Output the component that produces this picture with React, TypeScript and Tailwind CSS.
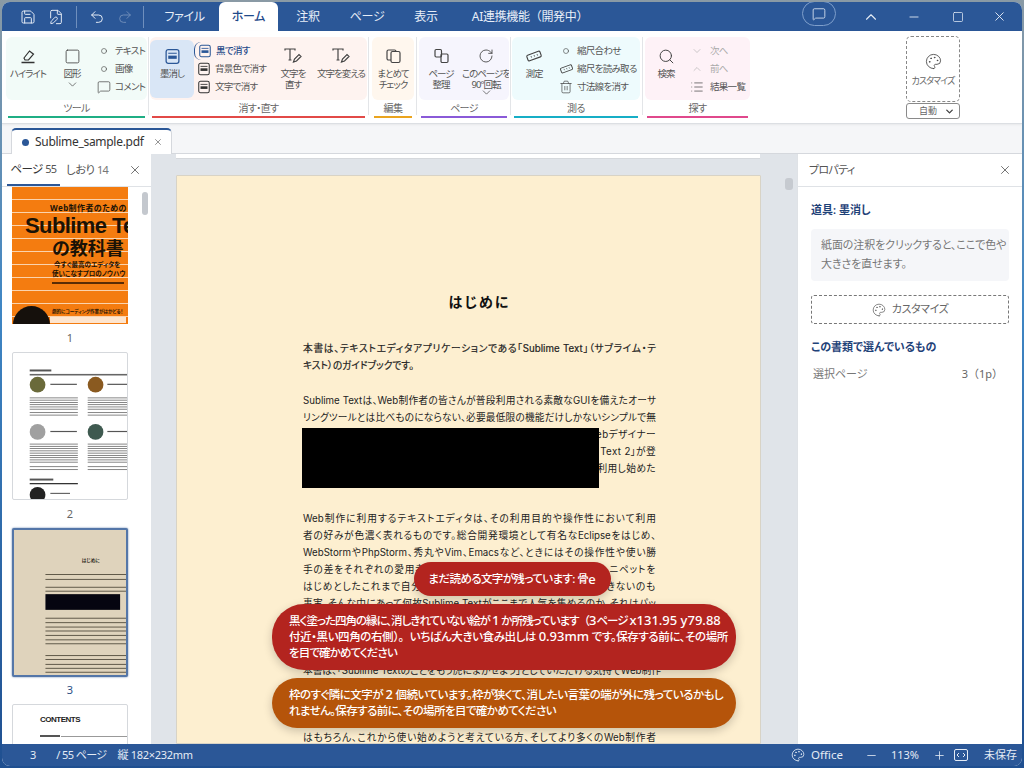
import React from "react";
import { Save, FilePen, Undo2, Redo2, MessageSquare, ChevronUp, ChevronDown, Minus, Plus, Square, X, Circle, RotateCw, Trash2, Search, List, Palette } from "lucide-react";

const Redact = ({ s = 16, c = "#333" }: { s?: number; c?: string }) => (
  <svg width={s} height={s} viewBox="0 0 16 16" fill="none">
    <rect x="2" y="1.5" width="12" height="13" rx="2" stroke={c} strokeWidth="1.2" />
    <rect x="4" y="7.2" width="8" height="3" fill={c} />
    <line x1="4" y1="5" x2="12" y2="5" stroke={c} />
  </svg>
);
const TPen = () => (
  <svg width="20" height="18" viewBox="0 0 20 18" fill="none" stroke="#444" strokeWidth="1.2">
    <path d="M2 3.5V2h10v1.5M7 2v11M5.5 13h3" />
    <path d="M10.5 15l1-3 4.5-4.5 2 2-4.5 4.5z" />
  </svg>
);
const Highlight = () => (
  <svg width="18" height="18" viewBox="0 0 18 18" fill="none" stroke="#333" strokeWidth="1.2">
    <path d="M5 11l5.5-7 4 3.2L9.5 13H6z" />
    <path d="M2.5 15.5h13" strokeWidth="1.6" />
  </svg>
);
const Pages = () => (
  <svg width="17" height="18" viewBox="0 0 17 18" fill="none" stroke="#444" strokeWidth="1.2">
    <rect x="2" y="3" width="9" height="10" rx="1.5" />
    <rect x="6" y="4.5" width="9" height="11" rx="1.5" fill="#fff7ee" />
  </svg>
);
const Organize = () => (
  <svg width="17" height="18" viewBox="0 0 17 18" fill="none" stroke="#444" strokeWidth="1.2">
    <rect x="2" y="2.5" width="6.5" height="7.5" rx="1.2" />
    <rect x="8" y="7" width="7" height="8.5" rx="1.2" />
  </svg>
);
const RulerTilt = ({ w = 18 }: { w?: number }) => (
  <svg width={w} height={w * 0.78} viewBox="0 0 18 14" fill="none" stroke="#444" strokeWidth="1.1">
    <rect x="2" y="4" width="14" height="6" rx="1.3" transform="rotate(-20 9 7)" />
    <path d="M6 7l.6 1.6M9 6l.6 1.6M12 5l.6 1.6" strokeWidth="0.8" />
  </svg>
);

const Big = ({ icon, label, w, sub, chev, className = "" }: { icon: React.ReactNode; label: React.ReactNode; w: string; sub?: React.ReactNode; chev?: boolean; className?: string }) => (
  <div className={`${w} ${className} flex flex-col items-center shrink-0 pt-[10px] text-[9.5px] tracking-[-1px] leading-[11px] text-[#555] text-center whitespace-nowrap`}>
    <div className="h-[18px] flex items-center justify-center">{icon}</div>
    <div className="mt-[3px]">{label}</div>
    {sub && <div>{sub}</div>}
    {chev && <ChevronDown size={13} strokeWidth={1.3} className="text-[#444] -mt-[1px]" />}
  </div>
);
const Row = ({ icon, label, cls = "text-[#555]" }: { icon: React.ReactNode; label: string; cls?: string }) => (
  <div className={`h-[18px] flex items-center text-[9.5px] tracking-[-0.7px] whitespace-nowrap ${cls}`}>
    <div className="w-[20px] flex justify-center shrink-0 mr-[1px]">{icon}</div>
    <span>{label}</span>
  </div>
);
const Group = ({ w, pill, bar, label, children }: { w: string; pill: string; bar: string; label: string; children: React.ReactNode }) => (
  <div className={`${w} shrink-0 flex flex-col`}>
    <div className={`h-[63px] rounded-[6px] flex ${pill} overflow-hidden`}>{children}</div>
    <div className="h-[16px] flex items-center justify-center text-[10px] tracking-[-0.6px] text-[#666]">{label}</div>
    <div className={`h-[2px] mx-[2px] ${bar}`} />
  </div>
);
const Div = ({ cls }: { cls: string }) => <div className={`w-px h-[78px] bg-[#e3e5e8] shrink-0 ${cls}`} />;

const Dot = () => <Circle size={6} strokeWidth={2.2} className="text-[#333]" />;

const Tab = ({ children, w, active }: { children: React.ReactNode; w: string; active?: boolean }) => (
  <div className={`${w} shrink-0 flex items-center justify-center text-[12px] tracking-[-0.3px] h-[29px] whitespace-nowrap ${active ? "bg-white text-[#1f4a8a] font-medium rounded-t-[6px]" : "text-[#e8eef7]"}`}>{children}</div>
);

const L = ({ children, j = true, b }: { children?: React.ReactNode; j?: boolean; b?: boolean }) => (
  <div className={`h-[17px] shrink-0 leading-[17px] whitespace-nowrap ${j ? "[text-align-last:justify]" : ""} ${b ? "[-webkit-text-stroke:0.2px_#222]" : ""}`}>{children}</div>
);
const Split = ({ a, z }: { a: string; z: string }) => (
  <div className="h-[17px] shrink-0 leading-[17px] whitespace-nowrap flex justify-between tracking-[0.8px]"><span>{a}</span><span>{z}</span></div>
);

const lines = (ys: number[], x1: number, x2: number, h = 0.8, fill = "#666") =>
  ys.map((y) => <rect key={`${x1}-${y}`} x={x1} y={y} width={x2 - x1} height={h} fill={fill} />);

const Thumb2 = () => (
  <svg width="114" height="146" viewBox="0 0 116 148" className="block">
    <rect x="17" y="16.5" width="22" height="2" fill="#555" />
    <rect x="17" y="21" width="99" height="1.6" fill="#666" />
    <circle cx="25" cy="32" r="8" fill="#6a6a3a" /><circle cx="84" cy="32" r="8" fill="#8a5a20" />
    <circle cx="25" cy="80" r="8" fill="#a0a0a0" /><circle cx="84" cy="80" r="8" fill="#3f5a50" />
    <rect x="38" y="31" width="27" height="1.2" fill="#555" /><rect x="96" y="31" width="20" height="1.2" fill="#555" />
    <rect x="38" y="79" width="27" height="1.2" fill="#555" /><rect x="96" y="79" width="20" height="1.2" fill="#555" />
    {lines([45, 47.3, 49.6, 51.9, 54.2, 56.5, 60, 62.5], 17, 66)}
    {lines([45, 47.3, 49.6, 51.9, 54.2, 56.5, 60, 62.5], 76, 116)}
    {lines([92, 94.3, 96.6, 98.9, 101.2, 103.5, 105.8, 108.1, 110.4, 115, 118], 17, 66)}
    {lines([92, 94.3, 96.6, 98.9, 101.2, 103.5, 105.8, 108.1, 110.4, 115, 118], 76, 116)}
    <rect x="17" y="127.5" width="24" height="2" fill="#555" />
    <rect x="17" y="132" width="49" height="1.3" fill="#333" />
    <circle cx="25" cy="144" r="8" fill="#222" /><rect x="38" y="142" width="20" height="1.2" fill="#666" />
  </svg>
);
const Thumb3 = () => (
  <svg width="112" height="145" viewBox="0 0 114 147" className="block">
    <text x="69" y="32" fontSize="4.8" fontWeight="700" fill="#332e25">はじめに</text>
    {lines([44.5, 49.5, 57.5, 61.5, 89, 93.5, 98, 102, 106.5, 111, 115, 127, 131, 136, 140, 144], 32, 114, 1, "#5f5848")}
    <rect x="32" y="65" width="76" height="16" fill="#050510" />
  </svg>
);

const Latin = ({ children }: { children: React.ReactNode }) => <span className="text-[13px] leading-[10px] tracking-[0px]">{children}</span>;
const Wide = ({ children }: { children: React.ReactNode }) => <span className="[font-feature-settings:normal]">{children}</span>;

export default function App() {
  return (
    <div className="w-[1024px] h-[768px] overflow-hidden p-[2px] bg-[linear-gradient(180deg,#8a9aa5_0%,#3f86c4_40%,#1f4f90_100%)] [font-family:'Noto_Sans','Noto_Sans_CJK_JP',sans-serif] [font-feature-settings:'palt'] relative">
      <div className="w-full h-full bg-white rounded-[8px] overflow-hidden flex flex-col relative">
        {/* title bar */}
        <div className="h-[29px] bg-[#2b5797] flex items-end shrink-0 text-[#e4ebf5]">
          <div className="w-[25px] h-full flex items-center justify-center ml-[13px]"><Save size={16} strokeWidth={1.5} /></div>
          <div className="w-[25px] h-full flex items-center justify-center ml-[3px]"><FilePen size={16} strokeWidth={1.5} /></div>
          <div className="w-px h-[22px] self-center bg-[#6f8fbd] ml-[8px]" />
          <div className="w-[25px] h-full flex items-center justify-center ml-[7px]"><Undo2 size={16} strokeWidth={1.5} /></div>
          <div className="w-[25px] h-full flex items-center justify-center ml-[3px] text-[#6e8cb8]"><Redo2 size={16} strokeWidth={1.5} /></div>
          <div className="w-px h-[22px] self-center bg-[#6f8fbd] ml-[6px]" />
          <Tab w="w-[73px] ml-[2px] pl-[4px]">ファイル</Tab>
          <Tab w="w-[59px]" active>ホーム</Tab>
          <Tab w="w-[60px]">注釈</Tab>
          <Tab w="w-[58px]">ページ</Tab>
          <Tab w="w-[60px]">表示</Tab>
          <Tab w="w-[148px]"><span className="[font-feature-settings:normal]">AI連携機能（開発中）</span></Tab>
          <div className="ml-auto h-full flex items-center">
            <div className="w-[34px] h-[25px] -mt-[6px] border border-[#7f9fcb] rounded-full flex items-center justify-center"><MessageSquare size={14} strokeWidth={1.4} /></div>
            <ChevronUp size={18} strokeWidth={1.5} className="ml-[26px]" />
            <Minus size={14} strokeWidth={1.5} className="ml-[27px]" />
            <Square size={12} strokeWidth={1.5} className="ml-[31px]" />
            <X size={15} strokeWidth={1.5} className="ml-[28px] mr-[15px]" />
          </div>
        </div>

        {/* ribbon */}
        <div className="h-[93px] shrink-0 bg-white border-b border-[#dcdfe3] flex pt-[6px] pl-[4px] shadow-[0_1px_2px_rgba(0,0,0,0.06)] z-10">
          <Group w="w-[141px]" pill="bg-[#f2fbf8]" bar="bg-[#1fae84]" label="ツール">
            <Big w="w-[44px]" icon={<Highlight />} label="ハイライト" />
            <Big w="w-[44px]" icon={<Square size={17} strokeWidth={1.2} className="text-[#444]" />} label="図形" chev />
            <div className="pt-[5px]">
              <Row icon={<Dot />} label="テキスト" />
              <Row icon={<Dot />} label="画像" />
              <Row icon={<MessageSquare size={14} strokeWidth={1.2} className="text-[#444]" />} label="コメント" />
            </div>
          </Group>
          <Div cls="mx-[1px]" />
          <Group w="w-[217px]" pill="bg-[#fef3f0]" bar="bg-[#e24a47]" label="消す・直す">
            <div className="w-[44px] h-[58px] my-[3px] rounded-[6px] bg-[#d9e6f6] shrink-0">
              <Big w="w-[44px]" icon={<Redact s={17} c="#2b5797" />} label="墨消し" className="!pt-[7px]" />
            </div>
            <div className="pt-[5px] w-[87px] shrink-0">
              <Row icon={<Redact s={14} c="#2b5797" />} label="黒で消す" cls="text-[#1f4a8a] font-medium border-l-[1.5px] border-[#2b5797] rounded-l-[7px] -mr-[1.5px]" />
              <Row icon={<Redact s={14} />} label="背景色で消す" />
              <Row icon={<Redact s={14} />} label="文字で消す" />
            </div>
            <Big w="w-[38px]" icon={<TPen />} label="文字を" sub="直す" className="-ml-[7px]" />
            <Big w="w-[52px]" icon={<TPen />} label="文字を変える" className="ml-[3px]" />
          </Group>
          <Div cls="ml-[1px] mr-[3px]" />
          <Group w="w-[42px]" pill="bg-[#fff7ee]" bar="bg-[#eaa41e]" label="編集">
            <Big w="w-[42px]" icon={<Pages />} label="まとめて" sub="チェック" />
          </Group>
          <Div cls="mx-[2px]" />
          <Group w="w-[90px]" pill="bg-[#f6f5fd]" bar="bg-[#8a5ad8]" label="ページ">
            <Big w="w-[44px]" icon={<Organize />} label="ページ" sub="整理" />
            <Big w="w-[46px]" icon={<RotateCw size={16} strokeWidth={1.3} className="text-[#444]" />} label="このページを" sub="90°回転" chev className="[&>svg]:-mt-[4px]" />
          </Group>
          <Div cls="mx-[1px]" />
          <Group w="w-[128px]" pill="bg-[#eefbfd]" bar="bg-[#17aec6]" label="測る">
            <Big w="w-[44px]" icon={<RulerTilt />} label="測定" />
            <div className="pt-[5px]">
              <Row icon={<Dot />} label="縮尺合わせ" />
              <Row icon={<RulerTilt w={15} />} label="縮尺を読み取る" />
              <Row icon={<Trash2 size={14} strokeWidth={1.2} className="text-[#444]" />} label="寸法線を消す" />
            </div>
          </Group>
          <Div cls="mx-[2px]" />
          <Group w="w-[105px]" pill="bg-[#fef2f7]" bar="bg-[#e0488c]" label="探す">
            <Big w="w-[42px]" icon={<Search size={17} strokeWidth={1.4} className="text-[#444]" />} label="検索" />
            <div className="pt-[5px] w-[63px] [&_span]:ml-[2px]">
              <Row icon={<ChevronDown size={12} strokeWidth={1.2} className="text-[#aaa]" />} label="次へ" cls="text-[#aaa]" />
              <Row icon={<ChevronUp size={12} strokeWidth={1.2} className="text-[#aaa]" />} label="前へ" cls="text-[#aaa]" />
              <Row icon={<List size={14} strokeWidth={1.2} className="text-[#444]" />} label="結果一覧" />
            </div>
          </Group>
          <div className="ml-[156px] w-[54px] shrink-0 flex flex-col -mt-[1px]">
            <div className="h-[66px] border border-dashed border-[#888] rounded-[5px] flex flex-col items-center pt-[16px] text-[#666]">
              <Palette size={17} strokeWidth={1.2} className="text-[#444]" />
              <span className="text-[9px] tracking-[-0.9px] mt-[4px] whitespace-nowrap">カスタマイズ</span>
            </div>
            <div className="h-[16px] mt-[1px] border border-[#8a8a8a] rounded-[3px] flex items-center justify-between pl-[12px] pr-[4px] text-[9px] text-[#666]">
              <span>自動</span><ChevronDown size={11} strokeWidth={3} className="text-[#444]" />
            </div>
          </div>
        </div>

        {/* doc tab bar */}
        <div className="h-[30px] shrink-0 bg-[#f5f6f8] flex items-end pl-[9px] border-b border-[#d5d8dd]">
          <div className="w-[161px] h-[26px] -mb-px bg-white border-t-2 border-x border-[#2b5797] border-x-[#d5d8dd] rounded-t-[5px] flex items-center pl-[10px] text-[12px] tracking-[-0.3px] text-[#333] whitespace-nowrap">
            <span className="w-[7px] h-[7px] rounded-full bg-[#2b5797] mr-[6px] shrink-0" />
            <span>Sublime_sample.pdf</span>
            <X size={10} strokeWidth={1.5} className="ml-[9px] text-[#555]" />
          </div>
        </div>

        {/* main */}
        <div className="flex-1 flex min-h-0">
          {/* thumbnails */}
          <div className="w-[149px] shrink-0 bg-white flex flex-col relative">
            <div className="h-[33px] shrink-0 border-b border-[#dfe2e6] flex items-center text-[11.5px] tracking-[-0.6px] text-[#555] relative">
              <div className="ml-[5px] w-[53px] h-full flex items-center justify-center border-b-2 border-[#2b5797] text-[#333]">ページ&nbsp;<span className="text-[11px] text-[#555]">55</span></div>
              <div className="ml-[6px] whitespace-nowrap">しおり&nbsp;<span className="text-[11px] text-[#777]">14</span></div>
              <X size={14} strokeWidth={1.4} className="ml-[20px] text-[#555]" />
            </div>
            <div className="flex-1 overflow-hidden flex flex-col pl-[10px]">
              <div className="w-[116px] h-[137px] shrink-0 overflow-hidden relative flex flex-col bg-[#f47c10] bg-[repeating-linear-gradient(180deg,#f47c10_0px,#f47c10_12px,#fbd3ad_12px,#fbd3ad_13px)] text-[#1a1206] font-bold">
                <div className="text-[8px] tracking-[0.4px] leading-[10px] mt-[16px] ml-[38px] whitespace-nowrap">Web制作者のための</div>
                <div className="text-[22px] leading-[24px] mt-[1px] ml-[13px] whitespace-nowrap tracking-[-0.6px] [font-family:'Liberation_Sans',sans-serif]">Sublime Te</div>
                <div className="text-[18px] leading-[20px] ml-[40px] whitespace-nowrap">の教科書</div>
                <div className="text-[6.5px] leading-[8px] mt-[3px] ml-[42px] whitespace-nowrap">今すぐ最高のエディタを</div>
                <div className="text-[6.5px] leading-[8px] mt-[1px] ml-[40px] whitespace-nowrap">使いこなすプロのノウハウ</div>
                <div className="h-[2px] w-[72px] mt-[4px] ml-[40px] bg-[#5a2c06]" />
                <div className="absolute left-[1px] top-[119px] w-[37px] h-[37px] rounded-full bg-[#15100c]" />
                <div className="absolute left-[40px] top-[121px] text-[4.5px] leading-[7px] whitespace-nowrap">劇的にコーディング作業がはかどる！</div>
                <div className="absolute left-[38px] top-[130px] w-[76px] h-[6px] bg-white/80" />
              </div>
              <div className="h-[28px] shrink-0 w-[116px] flex items-center justify-center text-[11px] text-[#666]">1</div>
              <div className="w-[116px] h-[148px] shrink-0 border border-[#d5d8dc] rounded-[2px] bg-white overflow-hidden"><Thumb2 /></div>
              <div className="h-[28px] shrink-0 w-[116px] flex items-center justify-center text-[11px] text-[#666]">2</div>
              <div className="w-[116px] h-[149px] shrink-0 border-2 border-[#5476a8] rounded-[2px] bg-[#dfd3bc] overflow-hidden shadow-[0_0_2px_#5476a8]"><Thumb3 /></div>
              <div className="h-[27px] shrink-0 w-[116px] flex items-center justify-center text-[11px] text-[#2b4f85]">3</div>
              <div className="w-[116px] h-[60px] shrink-0 border border-[#d5d8dc] rounded-[2px] bg-white overflow-hidden pl-[27px] pt-[10px]">
                <div className="text-[8px] leading-[10px] font-bold tracking-[-0.5px] text-[#222] whitespace-nowrap [font-family:'Liberation_Sans',sans-serif]">CONTENTS</div>
                <div className="flex items-center mt-[10px]"><span className="w-[20px] h-[2px] bg-[#555] mr-[1px]" /><span className="flex-1 h-px bg-[#999]" /></div>
              </div>
            </div>
            <div className="absolute left-[140px] top-[38px] w-[6px] h-[23px] rounded-full bg-[#c4c8ce]" />
          </div>

          {/* document */}
          <div className="flex-1 min-w-0 bg-[#e0e4e9] flex flex-col overflow-hidden relative">
            <div className="h-[5px] shrink-0 bg-white ml-[25px] w-[584px] border-b border-[#d5d8dc]" />
            <div className="ml-[25px] mt-[16px] w-[585px] flex-1 bg-[#fdefd0] border border-[#d8d3c6] rounded-t-[1px] flex flex-col items-stretch pl-[126px] pr-[104px] text-[9.7px] text-[#222] [font-family:'Inter','Noto_Sans_CJK_JP',sans-serif] overflow-hidden">
              <div className="text-center font-bold text-[14px] leading-[20px] tracking-[2px] mt-[116px] text-[#111] shrink-0">はじめに</div>
              <div className="h-[28px] shrink-0" />
              <L b>本書は、テキストエディタアプリケーションである「Sublime Text」（サブライム・テ</L>
              <L j={false} b>キスト）のガイドブックです。</L>
              <div className="h-[18px] shrink-0" />
              <L>Sublime Textは、Web制作者の皆さんが普段利用される素敵なGUIを備えたオーサ</L>
              <L>リングツールとは比べものにならない、必要最低限の機能だけしかないシンプルで無</L>
              <div className="h-[17px] shrink-0 leading-[17px] text-right tracking-[0.4px]">ebデザイナー</div>
              <div className="h-[17px] shrink-0 leading-[17px] text-right tracking-[0.4px]">Text 2」が登</div>
              <div className="h-[17px] shrink-0 leading-[17px] text-right tracking-[0.4px]">利用し始めた</div>
              <div className="h-[33px] shrink-0" />
              <L>Web制作に利用するテキストエディタは、その利用目的や操作性において利用</L>
              <L>者の好みが色濃く表れるものです。総合開発環境として有名なEclipseをはじめ、</L>
              <L>WebStormやPhpStorm、秀丸やVim、Emacsなど、ときにはその操作性や使い勝</L>
              <Split a="手の差をそれぞれの愛用者同" z="ニペットを" />
              <Split a="はじめとしたこれまで自分" z="きないのも" />
              <L>事実。そんな中にあって何故Sublime Textがここまで人気を集めるのか。それはパッ</L>
              <div className="h-[50px] shrink-0" />
              <L j={false}>本書は、「Sublime Textのことをもう虎にまかせよう」としていただける気持でWeb制作</L>
              <div className="h-[50px] shrink-0" />
              <L>はもちろん、これから使い始めようと考えている方、そしてより多くのWeb制作者</L>
            </div>
            <div className="absolute left-[151px] top-[274px] w-[297px] h-[60px] bg-black" />
            <div className="absolute left-[634px] top-[24px] w-[8px] h-[12px] rounded-[3px] bg-[#c6cad0]" />
          </div>

          {/* properties */}
          <div className="w-[225px] shrink-0 bg-white border-l border-[#dfe2e6] flex flex-col">
            <div className="h-[33px] shrink-0 border-b border-[#dfe2e6] flex items-center justify-between pl-[11px] pr-[10px] text-[11px] tracking-[-0.7px] text-[#555]">
              <span>プロパティ</span><X size={14} strokeWidth={1.4} className="text-[#555]" />
            </div>
            <div className="px-[13px] flex flex-col text-[11px]">
              <div className="mt-[14px] leading-[18px] font-semibold text-[#1f4278]">道具: 墨消し</div>
              <div className="mt-[10px] h-[52px] rounded-[4px] bg-[#f5f6f9] px-[10px] py-[6px] leading-[19px] text-[#777] whitespace-nowrap tracking-[-0.1px]">紙面の注釈をクリックすると、ここで色や<br />大きさを直せます。</div>
              <div className="mt-[14px] h-[29px] border border-dashed border-[#777] rounded-[3px] flex items-center justify-center gap-[6px] text-[#666] tracking-[-0.4px]"><Palette size={14} strokeWidth={1.3} />カスタマイズ</div>
              <div className="mt-[14px] leading-[18px] font-semibold text-[#1f4278]">この書類で選んでいるもの</div>
              <div className="mt-[9px] flex justify-between pl-[2px] pr-[6px] leading-[18px] text-[#777]"><span>選択ページ</span><span className="text-[#666] [font-feature-settings:normal]">3（1p）</span></div>
            </div>
          </div>
        </div>

        {/* status */}
        <div className="h-[22px] shrink-0 bg-[#2b5797] flex items-center text-[11px] text-[#e4ebf5] whitespace-nowrap">
          <span className="ml-[28px]">3</span>
          <span className="ml-[20px] tracking-[-0.6px]">/ 55 ページ</span>
          <span className="ml-[11px] tracking-[-0.3px]">縦 182×232mm</span>
          <Palette size={14} strokeWidth={1.4} className="ml-auto" />
          <span className="ml-[6px] text-[11.5px]">Office</span>
          <Minus size={13} strokeWidth={1.5} className="ml-[22px]" />
          <span className="ml-[13px]">113%</span>
          <Plus size={13} strokeWidth={1.5} className="ml-[14px]" />
          <svg width="14" height="12" viewBox="0 0 14 12" fill="none" stroke="currentColor" className="ml-[8px]"><rect x="0.5" y="0.5" width="13" height="11" rx="1.5" /><path d="M5 4L3 6l2 2M9 4l2 2-2 2" /></svg>
          <span className="ml-[16px] mr-[5px]">未保存</span>
        </div>

        {/* toasts */}
        <div className="absolute left-[270px] top-[560px] w-[464px] flex flex-col items-center gap-[8px] text-white text-[11.5px] tracking-[-0.6px] font-medium leading-[16px]">
          <div className="h-[34px] w-[197px] ml-[16px] rounded-full bg-[#b3241f] flex items-center justify-center shadow-[0_3px_10px_rgba(0,0,0,0.2)] whitespace-nowrap">まだ読める文字が残っています: 骨<Latin>e</Latin></div>
          <div className="w-full rounded-[32px] bg-[#b3241f] px-[17px] py-[9px] shadow-[0_3px_10px_rgba(0,0,0,0.2)] whitespace-nowrap"><span className="tracking-[-1px]">黒く塗った四角の縁に、消しきれていない絵が <Latin>1</Latin> か所残っています<Wide>（</Wide><Latin>3</Latin>ページ </span><Latin>x131.95 y79.88</Latin><br /><span className="tracking-[-0.4px]">付近・黒い四角の右側<Wide>）。</Wide>いちばん大きい食み出しは <Latin>0.93mm</Latin> です。保存する前に、その場所</span><br /><span className="tracking-[-0.9px]">を目で確かめてください</span></div>
          <div className="w-full rounded-[25px] bg-[#b5540a] px-[17px] py-[9px] shadow-[0_3px_10px_rgba(0,0,0,0.2)] whitespace-nowrap"><span className="tracking-[-0.5px]">枠のすぐ隣に文字が <Latin>2</Latin> 個続いています。枠が狭くて、消したい言葉の端が外に残っているかもし</span><br />れません。保存する前に、その場所を目で確かめてください</div>
        </div>
      </div>
    </div>
  );
}
